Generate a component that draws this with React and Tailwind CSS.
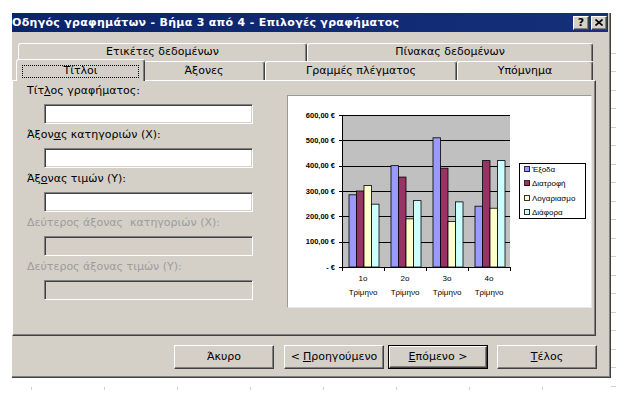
import React from "react";

const raised = "border border-t-white border-l-white border-b-[#404040] border-r-[#404040] shadow-[inset_-1px_-1px_0_#808080]";
const sunken = "border border-t-[#808080] border-l-[#808080] border-b-white border-r-white shadow-[inset_1px_1px_0_#404040,inset_-1px_-1px_0_#d4d0c8]";
const tabEdge = "border-t border-l border-r border-t-white border-l-white border-r-[#404040] shadow-[inset_-1px_0_0_#808080] rounded-t-[3px]";

const series = [
  { name: "Έξοδα", color: "#9999ff", values: [285, 400, 510, 240] },
  { name: "Διατροφή", color: "#993366", values: [300, 355, 390, 420] },
  { name: "Λογαριασμοί", color: "#ffffcc", values: [322, 190, 180, 232] },
  { name: "Διάφορα", color: "#ccffff", values: [248, 262, 257, 420] },
];

const fields = [
  { label: "Τίτ", u: "λ", rest: "ος γραφήματος:" },
  { label: "Άξον", u: "α", rest: "ς κατηγοριών (X):" },
  { label: "Άξ", u: "ο", rest: "νας τιμών (Y):" },
  { label: "Δεύτερος άξονας  κατηγοριών (X):", disabled: true },
  { label: "Δεύτερος άξονας τιμών (Y):", disabled: true },
];

function Chart() {
  const x0 = 54;
  const y0 = 171;
  const k = 152 / 600;
  const yLabels = ["600,00 €", "500,00 €", "400,00 €", "300,00 €", "200,00 €", "100,00 €"];
  return (
    <svg width="303" height="211" viewBox="0 0 303 211" className="block" fontFamily="'Liberation Sans', Arial, sans-serif">
      <rect x={x0} y={19} width={168} height={152} fill="#c0c0c0" shapeRendering="crispEdges" />
      {[100, 200, 300, 400, 500, 600].map((v) => (
        <line key={v} x1={x0 - 3} x2={222} y1={y0 - v * k + 0.5} y2={y0 - v * k + 0.5} stroke="#000" strokeWidth="1" shapeRendering="crispEdges" />
      ))}
      {series.map((s, j) =>
        s.values.map((v, i) => (
          <rect key={`${j}-${i}`} x={x0 + 42 * i + 7 + 7.5 * j} y={y0 - v * k} width={7.5} height={v * k} fill={s.color} stroke="#000" strokeWidth="0.8" />
        ))
      )}
      <line x1={x0 + 0.5} x2={x0 + 0.5} y1={19} y2={y0 + 1} stroke="#000" shapeRendering="crispEdges" />
      <line x1={x0 - 3} x2={222} y1={y0 + 0.5} y2={y0 + 0.5} stroke="#000" shapeRendering="crispEdges" />
      {[0, 1, 2, 3, 4].map((i) => (
        <line key={i} x1={x0 + 42 * i + 0.5} x2={x0 + 42 * i + 0.5} y1={y0} y2={y0 + 4} stroke="#000" shapeRendering="crispEdges" />
      ))}
      {yLabels.map((t, i) => (
        <text key={t} x={47} y={19 + i * 25.33 + 2.8} fontSize="7.5" fontWeight="700" textAnchor="end" fill="#000">{t}</text>
      ))}
      <text x={47} y={y0 + 2.8} fontSize="7.5" fontWeight="700" textAnchor="end" fill="#000">-      €</text>
      {["1ο", "2ο", "3ο", "4ο"].map((t, i) => (
        <g key={t}>
          <text x={x0 + 21 + 42 * i} y={185} fontSize="8" textAnchor="middle" fill="#000">{t}</text>
          <text x={x0 + 21 + 42 * i} y={199} fontSize="8" textAnchor="middle" fill="#000">Τρίμηνο</text>
        </g>
      ))}
      <rect x={231.5} y={67.5} width={66} height={55} fill="#fff" stroke="#000" strokeWidth="1" shapeRendering="crispEdges" />
      {series.map((s, j) => (
        <g key={s.name}>
          <rect x={236.5} y={70.5 + j * 14.3} width={5} height={5} fill={s.color} stroke="#000" strokeWidth="0.8" shapeRendering="crispEdges" />
          <text x={244} y={76 + j * 14.3} fontSize="8" fill="#000">{s.name.slice(0, 10)}</text>
        </g>
      ))}
    </svg>
  );
}

function Field({ f }) {
  return (
    <div className="flex flex-col">
      <div className={`h-[16px] whitespace-pre text-[11px] leading-[16px] ${f.disabled ? "text-[#9c9c9c]" : "text-black"}`}>
        {f.u ? (
          <>
            {f.label}
            <span className="underline underline-offset-1">{f.u}</span>
            {f.rest}
          </>
        ) : (
          f.label
        )}
      </div>
      <div className={`ml-[17px] mt-[5px] h-[20px] w-[209px] ${sunken} ${f.disabled ? "bg-[#d4d0c8]" : "bg-white"}`} />
    </div>
  );
}

function Button({ children, isDefault, className = "" }) {
  const inner = <div className={`flex h-full w-full items-center justify-center text-[11px] ${raised}`}>{children}</div>;
  if (isDefault) return <div className={`h-[24px] w-[100px] border border-black ${className}`}>{inner}</div>;
  return <div className={`h-[24px] w-[100px] ${className}`}>{inner}</div>;
}

function Dialog() {
  return (
    <div className="flex h-[365px] w-[599px] flex-col border-b border-r border-b-[#404040] border-r-[#404040] bg-[#d4d0c8] shadow-[inset_-1px_-1px_0_#808080]">
      <div className="mr-[2px] flex h-[19px] items-center bg-linear-to-r from-[#0a246a] to-[#162f7a]">
        <div className="flex-1 whitespace-nowrap text-[11px] font-bold leading-none tracking-[0.3px] text-white">Οδηγός γραφημάτων - Βήμα 3 από 4 - Επιλογές γραφήματος</div>
        <div className={`flex h-[14px] w-[16px] items-center justify-center bg-[#d4d0c8] text-[11px] font-bold leading-none ${raised}`}>?</div>
        <div className={`ml-[2px] mr-[1px] flex h-[14px] w-[16px] items-center justify-center bg-[#d4d0c8] ${raised}`}>
          <svg width="8" height="7" viewBox="0 0 8 7">
            <path d="M0.5 0.5 L7.5 6.5 M7.5 0.5 L0.5 6.5" stroke="#000" strokeWidth="1.6" />
          </svg>
        </div>
      </div>

      <div className="mt-[11px] pl-[6px]">
        <div className="flex h-[18px]">
          <div className={`flex w-[289px] items-center justify-center text-[11px] ${tabEdge}`}>Ετικέτες δεδομένων</div>
          <div className={`flex w-[286px] items-center justify-center text-[11px] ${tabEdge}`}>Πίνακας δεδομένων</div>
        </div>
        <div className="flex h-[19px] items-start">
          <div className={`relative z-10 -ml-[2px] -mt-[2px] flex h-[22px] w-[129px] bg-[#d4d0c8] px-[5px] pb-[3px] pt-[5px] ${tabEdge}`}>
            <div className="flex flex-1 items-center justify-center border border-dotted border-black text-[11px]">Τίτλοι</div>
          </div>
          <div className={`-ml-[2px] flex h-[19px] w-[122px] items-center justify-center text-[11px] ${tabEdge}`}>Άξονες</div>
          <div className={`flex h-[19px] w-[192px] items-center justify-center text-[11px] ${tabEdge}`}>Γραμμές πλέγματος</div>
          <div className={`flex h-[19px] w-[136px] items-center justify-center text-[11px] ${tabEdge}`}>Υπόμνημα</div>
        </div>
      </div>

      <div className="flex h-[256px] w-[584px] border-b border-l border-r border-t border-b-[#404040] border-l-white border-r-[#404040] border-t-white shadow-[inset_-1px_-1px_0_#808080]">
        <div className="flex w-[274px] flex-col gap-[3px] pl-[14px] pt-[2px]">
          {fields.map((f, i) => (
            <Field key={i} f={f} />
          ))}
        </div>
        <div className="mt-[14px] h-[213px] w-[305px] border border-b-[#e8e8e8] border-l-[#9a9a9a] border-r-[#e8e8e8] border-t-[#9a9a9a] bg-white">
          <Chart />
        </div>
      </div>

      <div className="mt-[9px] flex">
        <Button className="ml-[162px]">Άκυρο</Button>
        <Button className="ml-[10px]">
          &lt; <span className="ml-[3px] underline underline-offset-1">Π</span>ροηγούμενο
        </Button>
        <Button isDefault className="ml-[4px]">
          <span className="underline underline-offset-1">Ε</span>πόμενο &gt;
        </Button>
        <Button className="ml-[9px]">
          <span className="underline underline-offset-1">Τ</span>έλος
        </Button>
      </div>
    </div>
  );
}

export default function App() {
  return (
    <div className="h-[410px] w-[637px] overflow-hidden bg-white font-['DejaVu_Sans',sans-serif] text-black">
      <div className="flex pl-[12px] pt-[13px]">
        <Dialog />
        <div className="flex flex-col pt-[22px]">
          {Array.from({ length: 19 }).map((_, i) => (
            <div key={i} className="h-[18.5px] w-[5px] border-b border-[#cfcfcf]" />
          ))}
        </div>
      </div>
      <div className="ml-[31px] flex">
        {Array.from({ length: 8 }).map((_, i) => (
          <div key={i} className="h-[3px] w-[73px] border-l border-[#cfcfcf]" />
        ))}
      </div>
    </div>
  );
}
